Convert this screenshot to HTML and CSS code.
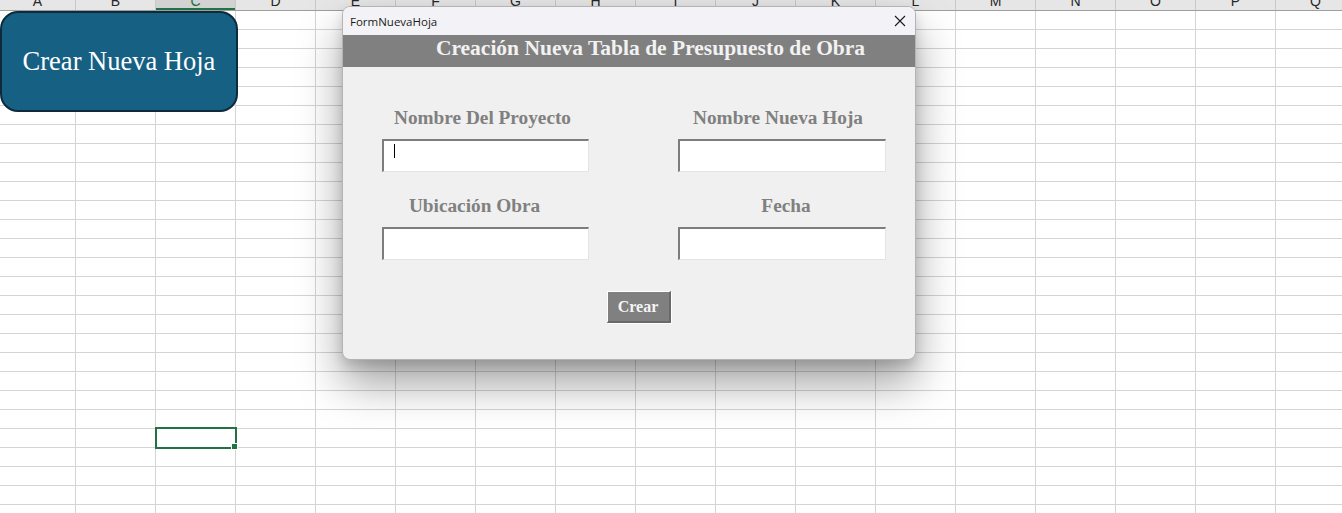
FILE: index.html
```html
<!DOCTYPE html>
<html lang="es">
<head>
    <meta charset="UTF-8">
    <meta name="viewport" content="width=device-width, initial-scale=1.0">
    <title>FormNuevaHoja</title>
    <link rel="stylesheet" href="styles.css">
</head>
<body>
    <div class="sheet">
        <div class="col-heads" id="colHeads"></div>
        <div class="grid" id="grid"></div>
    </div>

    <div class="shape-btn">Crear Nueva Hoja</div>

    <div class="dialog">
        <div class="title-bar">
            <span class="title">FormNuevaHoja</span>
            <span class="close">
                <svg width="12" height="12" viewBox="0 0 12 12">
                    <path d="M1 1 L11 11 M11 1 L1 11" stroke="#1a1a1a" stroke-width="1.1" fill="none"/>
                </svg>
            </span>
        </div>
        <div class="banner">Creación Nueva Tabla de Presupuesto de Obra</div>
        <div class="form-body">
            <div class="fields">
                <div class="field">
                    <label class="lbl lbl-proyecto">Nombre Del Proyecto</label>
                    <div class="input-wrap">
                        <input type="text" class="txt">
                        <span class="caret"></span>
                    </div>
                </div>
                <div class="field">
                    <label class="lbl lbl-hoja">Nombre Nueva Hoja</label>
                    <div class="input-wrap"><input type="text" class="txt"></div>
                </div>
                <div class="field">
                    <label class="lbl lbl-ubicacion">Ubicación Obra</label>
                    <div class="input-wrap"><input type="text" class="txt"></div>
                </div>
                <div class="field">
                    <label class="lbl lbl-fecha">Fecha</label>
                    <div class="input-wrap"><input type="text" class="txt"></div>
                </div>
            </div>
            <div class="actions">
                <button class="crear-btn">Crear</button>
            </div>
        </div>
    </div>

    <script>
        const letters = 'ABCDEFGHIJKLMNOPQ'.split('');
        const heads = document.getElementById('colHeads');
        const grid = document.getElementById('grid');

        letters.forEach(l => {
            const h = document.createElement('div');
            h.className = 'col-head' + (l === 'C' ? ' active' : '');
            h.innerHTML = '<span>' + l + '</span>';
            heads.appendChild(h);
        });

        // 27 rows fill the window
        for (let r = 1; r <= 27; r++) {
            letters.forEach(l => {
                const c = document.createElement('div');
                c.className = 'cell';
                if (l === 'C' && r === 23) c.className += ' selected';
                grid.appendChild(c);
            });
        }
    </script>
</body>
</html>
```

FILE: styles.css
```css
body {
    margin: 0;
    overflow: hidden;
    background: #ffffff;
    font-family: "Liberation Sans", Arial, sans-serif;
}
.sheet {
    width: 1356px;
}
.col-heads,
.grid {
    display: grid;
    grid-template-columns: 76px repeat(16, 80px);
}
.col-heads {
    height: 11px;
    background: #e6e6e6;
    border-bottom: 1px solid #9e9e9e;
    box-sizing: border-box;
}
.col-head {
    height: 10px;
    overflow: hidden;
    text-align: center;
    border-right: 1px solid #c8c8c8;
    font-size: 14px;
    line-height: 16px;
    color: #262626;
}
.col-head span {
    display: block;
    margin-top: -7px;
}
.col-head.active {
    background: #d2d2d2;
    color: #1e6b40;
    box-shadow: inset 0 -2px 0 #217346;
}
.cell {
    height: 19px;
    box-sizing: border-box;
    border-right: 1px solid #d4d4d4;
    border-bottom: 1px solid #d4d4d4;
}
.cell.selected {
    position: relative;
}
.cell.selected::before {
    content: "";
    position: absolute;
    left: -1px;
    top: -2px;
    right: -2px;
    bottom: -2px;
    border: 2px solid #217346;
}
.cell.selected::after {
    content: "";
    position: absolute;
    right: -3px;
    bottom: -3px;
    width: 5px;
    height: 5px;
    background: #217346;
    border: 1px solid #ffffff;
}

.shape-btn {
    position: absolute;
    left: 0;
    top: 11px;
    width: 238px;
    height: 101px;
    box-sizing: border-box;
    background: #166083;
    border: 2px solid #0d2b3b;
    border-radius: 18px;
    color: #ffffff;
    font-family: "Liberation Serif", "Times New Roman", serif;
    font-size: 26.5px;
    display: flex;
    align-items: center;
    justify-content: center;
}

.dialog {
    position: absolute;
    left: 342px;
    top: 6px;
    width: 574px;
    height: 354px;
    box-sizing: border-box;
    background: #f0f0f0;
    border: 1px solid #b4b4b4;
    border-radius: 8px;
    overflow: hidden;
    box-shadow: 0 24px 44px rgba(0,0,0,0.36), 0 6px 12px rgba(0,0,0,0.14);
    display: flex;
    flex-direction: column;
}
.title-bar {
    height: 28px;
    background: #f3f3f7;
    display: flex;
    align-items: center;
    justify-content: space-between;
    padding: 0 9px 0 7px;
}
.title {
    font-family: "Open Sans", "Noto Sans", sans-serif;
    font-size: 11.5px;
    color: #1a1a1a;
}
.close {
    display: flex;
}
.banner {
    height: 32px;
    background: #808080;
    color: #f2f2f2;
    font-family: "Liberation Serif", "Times New Roman", serif;
    font-weight: bold;
    font-size: 21.5px;
    line-height: 26px;
    text-align: center;
    padding-left: 43px;
}
.form-body {
    padding-top: 41px;
}
.fields {
    display: grid;
    grid-template-columns: 207px 208px;
    column-gap: 89px;
    row-gap: 24px;
    padding-left: 39px;
}
.field {
    display: flex;
    flex-direction: column;
    gap: 11px;
}
.lbl {
    height: 20px;
    line-height: 20px;
    text-align: center;
    color: #808080;
    font-family: "Liberation Serif", "Times New Roman", serif;
    font-weight: bold;
    font-size: 19.3px;
}
.lbl-proyecto { padding-right: 6px; }
.lbl-hoja { padding-right: 8px; }
.lbl-ubicacion { padding-right: 22px; }
.lbl-fecha { padding-left: 8px; }
.input-wrap {
    position: relative;
}
.txt {
    display: block;
    width: 100%;
    height: 33px;
    margin: 0;
    box-sizing: border-box;
    background: #ffffff;
    border-top: 2px solid #7d7d7d;
    border-left: 2px solid #7d7d7d;
    border-right: 1px solid #e4e4e4;
    border-bottom: 1px solid #e4e4e4;
    outline: none;
}
.caret {
    position: absolute;
    left: 12px;
    top: 5px;
    width: 1px;
    height: 14px;
    background: #000000;
}
.actions {
    display: flex;
    justify-content: center;
    padding-left: 19px;
    margin-top: 31px;
}
.crear-btn {
    width: 64px;
    height: 32px;
    background: #808080;
    color: #f4f4f4;
    font-family: "Liberation Serif", "Times New Roman", serif;
    font-weight: bold;
    font-size: 16px;
    border-top: 1px solid #ffffff;
    border-left: 1px solid #ffffff;
    border-right: 2px solid #696969;
    border-bottom: 2px solid #696969;
    box-shadow: 1px 1px 0 #ffffff;
    padding: 0;
}
```
